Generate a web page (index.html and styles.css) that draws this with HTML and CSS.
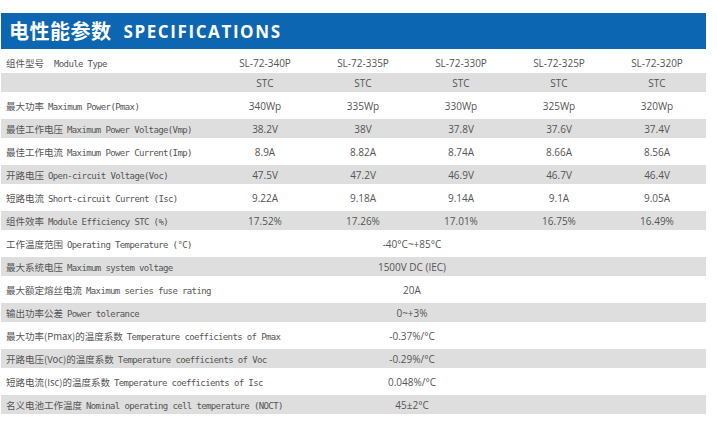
FILE: index.html
```html
<!DOCTYPE html>
<html lang="zh">
<head>
<meta charset="utf-8">
<title>电性能参数 SPECIFICATIONS</title>
<link rel="stylesheet" href="styles.css">
</head>
<body>
<div class="sheet">
  <div class="banner">
    <span class="banner-zh">电性能参数</span>
    <span class="banner-en">SPECIFICATIONS</span>
  </div>
  <div class="row first">
    <div class="label"><span class="zh">组件型号</span><span class="en wide">Module Type</span></div>
    <div class="val">SL-72-340P</div><div class="val">SL-72-335P</div><div class="val">SL-72-330P</div><div class="val">SL-72-325P</div><div class="val">SL-72-320P</div>
  </div>
  <div class="row gray">
    <div class="label"></div>
    <div class="val">STC</div><div class="val">STC</div><div class="val">STC</div><div class="val">STC</div><div class="val">STC</div>
  </div>
  <div class="row">
    <div class="label"><span class="zh">最大功率</span><span class="en">Maximum Power(Pmax)</span></div>
    <div class="val">340Wp</div><div class="val">335Wp</div><div class="val">330Wp</div><div class="val">325Wp</div><div class="val">320Wp</div>
  </div>
  <div class="row gray">
    <div class="label"><span class="zh">最佳工作电压</span><span class="en">Maximum Power Voltage(Vmp)</span></div>
    <div class="val">38.2V</div><div class="val">38V</div><div class="val">37.8V</div><div class="val">37.6V</div><div class="val">37.4V</div>
  </div>
  <div class="row">
    <div class="label"><span class="zh">最佳工作电流</span><span class="en">Maximum Power Current(Imp)</span></div>
    <div class="val">8.9A</div><div class="val">8.82A</div><div class="val">8.74A</div><div class="val">8.66A</div><div class="val">8.56A</div>
  </div>
  <div class="row gray">
    <div class="label"><span class="zh">开路电压</span><span class="en">Open-circuit Voltage(Voc)</span></div>
    <div class="val">47.5V</div><div class="val">47.2V</div><div class="val">46.9V</div><div class="val">46.7V</div><div class="val">46.4V</div>
  </div>
  <div class="row">
    <div class="label"><span class="zh">短路电流</span><span class="en">Short-circuit Current (Isc)</span></div>
    <div class="val">9.22A</div><div class="val">9.18A</div><div class="val">9.14A</div><div class="val">9.1A</div><div class="val">9.05A</div>
  </div>
  <div class="row gray">
    <div class="label"><span class="zh">组件效率</span><span class="en">Module Efficiency STC (%)</span></div>
    <div class="val">17.52%</div><div class="val">17.26%</div><div class="val">17.01%</div><div class="val">16.75%</div><div class="val">16.49%</div>
  </div>
  <div class="row">
    <div class="label"><span class="zh">工作温度范围</span><span class="en">Operating Temperature (°C)</span></div>
    <div class="val span4">-40°C~+85°C</div>
  </div>
  <div class="row gray">
    <div class="label"><span class="zh">最大系统电压</span><span class="en">Maximum system voltage</span></div>
    <div class="val span4">1500V DC (IEC)</div>
  </div>
  <div class="row">
    <div class="label"><span class="zh">最大额定熔丝电流</span><span class="en">Maximum series fuse rating</span></div>
    <div class="val span4">20A</div>
  </div>
  <div class="row gray">
    <div class="label"><span class="zh">输出功率公差</span><span class="en">Power tolerance</span></div>
    <div class="val span4">0~+3%</div>
  </div>
  <div class="row">
    <div class="label"><span class="zh">最大功率(Pmax)的温度系数</span><span class="en">Temperature coefficients of Pmax</span></div>
    <div class="val span4">-0.37%/°C</div>
  </div>
  <div class="row gray">
    <div class="label"><span class="zh">开路电压(Voc)的温度系数</span><span class="en">Temperature coefficients of Voc</span></div>
    <div class="val span4">-0.29%/°C</div>
  </div>
  <div class="row">
    <div class="label"><span class="zh">短路电流(Isc)的温度系数</span><span class="en">Temperature coefficients of Isc</span></div>
    <div class="val span4">0.048%/°C</div>
  </div>
  <div class="row gray">
    <div class="label"><span class="zh">名义电池工作温度</span><span class="en">Nominal operating cell temperature (NOCT)</span></div>
    <div class="val span4">45±2°C</div>
  </div>
</div>
</body>
</html>
```

FILE: styles.css
```css
html, body {
  margin: 0;
  padding: 0;
  background: #ffffff;
}

.sheet {
  width: 705px;
  margin: 13px 0 0 1px;
}

.banner {
  height: 36px;
  background: #0d66b1;
  display: flex;
  align-items: center;
  padding-left: 8px;
  color: #ffffff;
}

.banner-zh {
  font-family: "Noto Sans CJK SC", sans-serif;
  font-weight: 700;
  font-size: 20px;
  letter-spacing: 0.5px;
  line-height: 1;
}

.banner-en {
  font-family: "Open Sans", sans-serif;
  font-weight: 700;
  font-size: 17px;
  letter-spacing: 1.6px;
  margin-left: 12px;
  line-height: 1;
}

.row {
  display: grid;
  grid-template-columns: 215px repeat(5, 98px);
  height: 27px;
  align-items: center;
  color: #505050;
}

.row.first {
  height: 24px;
  padding-top: 3px;
  box-sizing: border-box;
}

.row.gray {
  height: 19px;
  background: #dedede;
}

.label {
  padding-left: 5px;
  white-space: nowrap;
  display: flex;
  align-items: baseline;
}

.zh {
  font-family: "Noto Sans CJK SC", sans-serif;
  font-size: 9.5px;
  color: #555555;
}

.en {
  font-family: "DejaVu Sans Mono", monospace;
  font-size: 9px;
  letter-spacing: -0.62px;
  margin-left: 4px;
  color: #555555;
}

.en.wide {
  margin-left: 10px;
}

.val {
  font-family: "Open Sans", sans-serif;
  font-size: 10px;
  text-align: center;
  color: #555555;
}

.val.span4 {
  grid-column: 2 / span 4;
}
```
